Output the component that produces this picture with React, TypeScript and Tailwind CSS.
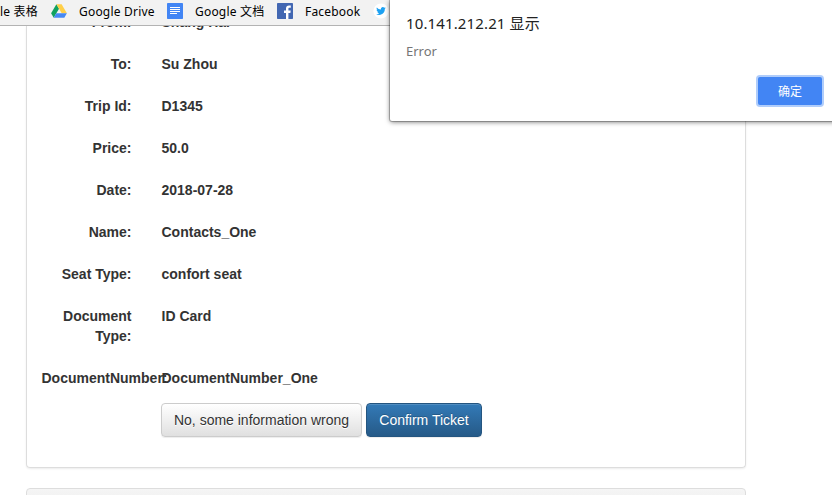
import React from 'react';

const rows: [string, string][] = [
  ['From:', 'Shang Hai'],
  ['To:', 'Su Zhou'],
  ['Trip Id:', 'D1345'],
  ['Price:', '50.0'],
  ['Date:', '2018-07-28'],
  ['Name:', 'Contacts_One'],
  ['Seat Type:', 'confort seat'],
  ['Document Type:', 'ID Card'],
  ['DocumentNumber:', 'DocumentNumber_One'],
];

function DriveIcon() {
  return (
    <svg width="16" height="16" viewBox="0 0 16 16" className="shrink-0">
      <path d="M5.4 1.2 8 5.7 2.7 14.8.1 10.3z" fill="#11a15f" />
      <path d="M5.4 1.2h5.2l5.3 9.1h-5.2z" fill="#ffcf48" />
      <path d="M5.3 10.3h10.6l-2.6 4.5H2.7z" fill="#4688f4" />
    </svg>
  );
}

function DocsIcon() {
  return (
    <svg width="16" height="16" viewBox="0 0 16 16" className="shrink-0">
      <rect width="16" height="16" rx="0.7" fill="#4285f4" />
      <path d="M3 4.5h10M3 6.5h10M3 8.5h10M3 10.5h7" stroke="#fff" strokeWidth="1" />
    </svg>
  );
}

function FacebookIcon() {
  return (
    <svg width="16" height="16" viewBox="0 0 16 16" className="shrink-0">
      <rect width="16" height="16" rx="0.7" fill="#4267b2" />
      <path d="M9 16V9.9H7V7.4h2V5.6c0-2 1.2-3.1 3-3.1.9 0 1.6.1 1.8.1v2.2h-1.2c-1 0-1.2.5-1.2 1.1v1.5h2.3l-.3 2.5h-2V16z" fill="#fff" />
    </svg>
  );
}

function TwitterIcon() {
  return (
    <svg width="16" height="16" viewBox="0 0 16 16" className="shrink-0">
      <circle cx="8" cy="8" r="7.6" fill="#fff" />
      <g transform="translate(3.2 3.2) scale(.4)">
        <path
          d="M23.95 4.57a10 10 0 0 1-2.82.77 4.96 4.96 0 0 0 2.16-2.72c-.95.55-2 .95-3.13 1.18a4.92 4.92 0 0 0-8.38 4.48C7.69 8.1 4.07 6.13 1.64 3.16a4.82 4.82 0 0 0-.67 2.48c0 1.71.87 3.21 2.19 4.1a4.9 4.9 0 0 1-2.23-.62v.06a4.92 4.92 0 0 0 3.95 4.83 5 5 0 0 1-2.21.08 4.94 4.94 0 0 0 4.6 3.42A9.87 9.87 0 0 1 0 19.54a14 14 0 0 0 7.55 2.21c9.05 0 14-7.5 14-13.98 0-.21 0-.42-.02-.63a9.94 9.94 0 0 0 2.46-2.55z"
          fill="#1da1f2"
        />
      </g>
    </svg>
  );
}

export default function App() {
  return (
    <div className="relative flex h-[495px] w-[832px] flex-col overflow-hidden bg-white font-['Liberation_Sans','Noto_Sans_CJK_SC',sans-serif] text-sm leading-5 text-[#333]">
      <header className="flex h-[26px] shrink-0 items-center border-b border-[#b3b3b3] bg-[#f2f2f2] pb-[3px] font-['Noto_Sans','Noto_Sans_CJK_SC',sans-serif] text-[12px] leading-5 tracking-[0.2px] whitespace-nowrap text-black">
        <span className="w-[51px] pt-0.5">le 表格</span>
        <DriveIcon />
        <span className="ml-3 w-[76px] pt-0.5">Google Drive</span>
        <span className="w-3" />
        <DocsIcon />
        <span className="ml-3 w-[82px] pt-0.5">Google 文档</span>
        <FacebookIcon />
        <span className="ml-3 w-[68px] pt-0.5">Facebook</span>
        <TwitterIcon />
      </header>

      <main className="min-h-0 flex-1 overflow-hidden pl-[26px]">
        <section className="flow-root h-[442px] w-[720px] rounded-b border border-t-0 border-[#ddd] shadow-[0_1px_2px_rgba(0,0,0,0.075)]">
          <dl className="-mt-3.5 flex flex-col gap-[22px] font-bold">
            {rows.map(([label, value]) => (
              <div key={label} className="flex">
                <dt className="ml-[14.5px] w-[90px] text-right">{label}</dt>
                <dd className="ml-[30px]">{value}</dd>
              </div>
            ))}
          </dl>
          <div className="mt-[15px] ml-[134px] flex gap-1">
            <button className="h-[34px] w-[201px] rounded border border-[#ccc] bg-linear-to-b from-white to-[#e0e0e0] whitespace-nowrap shadow-[inset_0_1px_0_rgba(255,255,255,0.15),0_1px_1px_rgba(0,0,0,0.075)] [text-shadow:0_1px_0_#fff]">
              No, some information wrong
            </button>
            <button className="h-[34px] w-[116px] rounded border border-[#245580] bg-linear-to-b from-[#337ab7] to-[#265a88] whitespace-nowrap text-white shadow-[inset_0_1px_0_rgba(255,255,255,0.15),0_1px_1px_rgba(0,0,0,0.075)] [text-shadow:0_-1px_0_rgba(0,0,0,0.2)]">
              Confirm Ticket
            </button>
          </div>
        </section>
        <section className="mt-5 h-10 w-[720px] rounded-t border border-[#ddd] bg-linear-to-b from-[#f5f5f5] to-[#e8e8e8]" />
      </main>

      <div
        role="dialog"
        className="absolute top-0 left-[390px] h-[121px] w-[450px] rounded-bl-[2px] bg-white font-['Noto_Sans','Noto_Sans_CJK_SC',sans-serif] shadow-[0_0_0_1px_rgba(0,0,0,0.22),0_1px_5px_rgba(0,0,0,0.55)]"
      >
        <h1 className="pt-[13px] pl-4 text-[15px] leading-5 tracking-[0.13px] text-[#222]">10.141.212.21 显示</h1>
        <p className="pt-2 pl-4 text-[13px] leading-5 text-[#757575]">Error</p>
        <button className="mt-4 ml-[368px] block h-[28px] w-[64px] rounded-[2px] bg-[#4285f4] pt-0.5 text-[12px] text-white shadow-[0_0_0_2px_#b0cdfb]">
          确定
        </button>
      </div>
    </div>
  );
}
